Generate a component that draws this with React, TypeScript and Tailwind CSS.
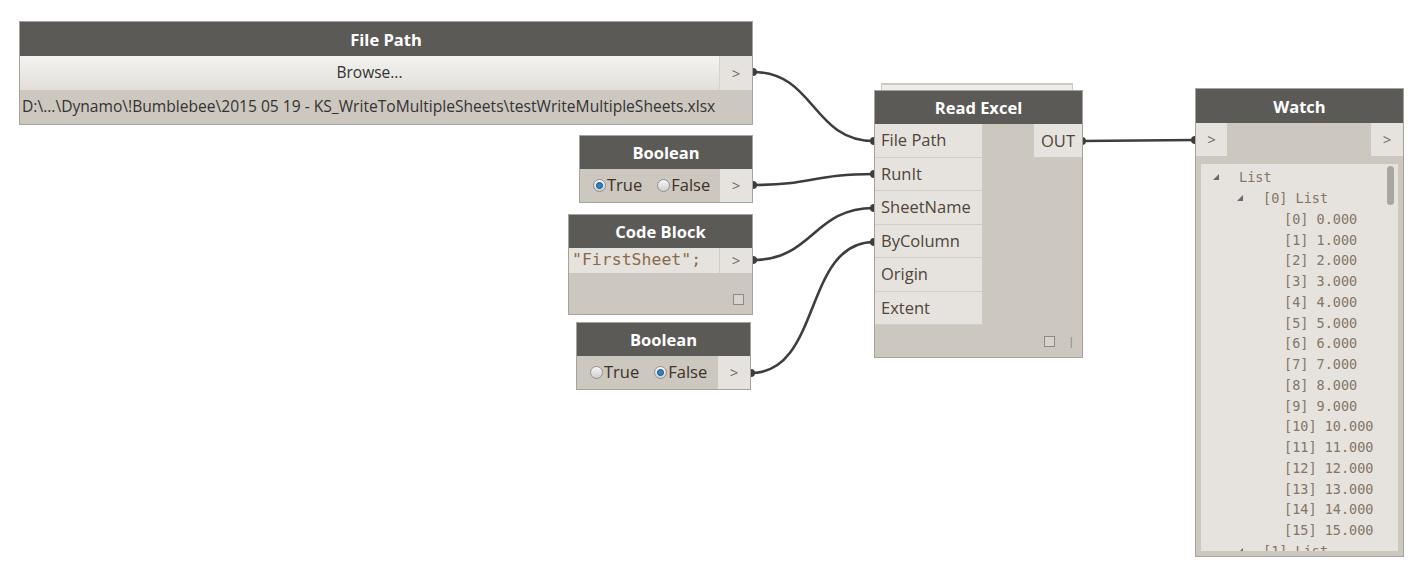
import React from "react"

const ui = "font-['Segoe_UI','Open_Sans','Noto_Sans',sans-serif]"
const mono = "font-['DejaVu_Sans_Mono','Liberation_Mono',monospace]"

function Header({ title, h = "h-[34px]" }: { title: string; h?: string }) {
  return (
    <div className={`${h} bg-[#5c5a57] flex items-center justify-center pt-[2px] text-white font-bold text-[16.5px]`}>
      {title}
    </div>
  )
}

function Arrow({ w = "w-[33px]", extra = "" }: { w?: string; extra?: string }) {
  return (
    <div className={`${w} ${extra} h-full bg-[#e6e3de] flex items-center justify-center text-[15px] text-[#6d6a66]`}>
      &gt;
    </div>
  )
}

function Radio({ on, label }: { on?: boolean; label: string }) {
  return (
    <div className="flex items-center gap-[1px]">
      <div className="w-[13px] h-[13px] rounded-full border border-[#8f9091] bg-gradient-to-b from-[#f6f6f6] to-[#cfcfcf] flex items-center justify-center">
        {on && <div className="w-[7px] h-[7px] rounded-full bg-[#2a86c6] border border-[#174f78]" />}
      </div>
      <span className="text-[16.5px] text-[#3d3128]">{label}</span>
    </div>
  )
}

function BoolNode({ pos, first }: { pos: string; first: boolean }) {
  return (
    <div className={`absolute ${pos} border border-[#a6a29c] bg-[#ccc7bf]`}>
      <Header title="Boolean" h="h-[33px]" />
      <div className="flex h-[33px]">
        <div className={`flex-1 flex items-center gap-[15px] ${first ? "pl-[13px]" : "pl-[13px]"}`}>
          <Radio on={first} label="True" />
          <Radio on={!first} label="False" />
        </div>
        <Arrow w="w-[32px]" />
      </div>
    </div>
  )
}

function Square({ extra = "" }: { extra?: string }) {
  return <div className={`w-[11px] h-[11px] border border-[#8d8a85] bg-[#d8d4cd] ${extra}`} />
}

function Tri() {
  return (
    <svg width="26" height="8" viewBox="0 0 26 8" className="shrink-0">
      <polygon points="0,7 6,7 6,1" fill="#6a6a6a" />
    </svg>
  )
}

const ports = ["File Path", "RunIt", "SheetName", "ByColumn", "Origin", "Extent"]

const watchRows: { indent: string; tri?: boolean; text: string }[] = [
  { indent: "pl-[12px]", tri: true, text: "List" },
  { indent: "pl-[36px]", tri: true, text: "[0] List" },
  ...Array.from({ length: 16 }, (_, i) => ({ indent: "pl-[83px]", text: `[${i}] ${i}.000` })),
  { indent: "pl-[36px]", tri: true, text: "[1] List" },
]

export default function App() {
  return (
    <div className={`relative w-[1427px] h-[580px] bg-white overflow-hidden ${ui}`}>
      {/* wires */}
      <svg className="absolute inset-0" width="1427" height="580">
        <g fill="none" stroke="#3d3d3d" strokeWidth="2.6">
          <path d="M753 72 C 815 72, 812 141, 874 141" />
          <path d="M753 185 C 813 185, 813 174, 874 174" />
          <path d="M753 260 C 813 260, 813 208, 874 208" />
          <path d="M751 373 C 822 373, 803 242, 874 242" />
          <path d="M1082 141 C 1138 141, 1138 140, 1195 140" />
        </g>
        <g fill="#3d3d3d">
          <circle cx="753" cy="72" r="4" />
          <circle cx="874" cy="141" r="4" />
          <circle cx="753" cy="185" r="4" />
          <circle cx="874" cy="174" r="4" />
          <circle cx="753" cy="260" r="4" />
          <circle cx="874" cy="208" r="4" />
          <circle cx="751" cy="373" r="4" />
          <circle cx="874" cy="242" r="4" />
          <circle cx="1082" cy="141" r="4" />
          <circle cx="1195" cy="140" r="4" />
        </g>
      </svg>

      {/* File Path */}
      <div className="absolute left-[19px] top-[21px] w-[734px] border border-[#a6a29c] bg-[#ccc7bf]">
        <Header title="File Path" />
        <div className="flex h-[34px]">
          <div className="flex-1 bg-gradient-to-b from-[#f4f3f1] to-[#e2dfda] flex items-center justify-center text-[15.5px] text-[#333]">
            Browse...
          </div>
          <Arrow w="w-[33px]" extra="border-l border-[#d6d2cc]" />
        </div>
        <div className="h-[34px] flex items-center pl-[2px] text-[15.6px] text-[#333] whitespace-nowrap">
          D:\...\Dynamo\!Bumblebee\2015 05 19 - KS_WriteToMultipleSheets\testWriteMultipleSheets.xlsx
        </div>
      </div>

      <BoolNode pos="left-[579px] top-[135px] w-[174px]" first />

      {/* Code Block */}
      <div className="absolute left-[568px] top-[214px] w-[185px] border border-[#a6a29c] bg-[#ccc7bf]">
        <Header title="Code Block" h="h-[33px]" />
        <div className="flex h-[25px]">
          <div className={`flex-1 bg-[#e6e3de] flex items-center pl-[3px] text-[16.5px] text-[#8a6a4c] ${mono}`}>
            "FirstSheet";
          </div>
          <Arrow w="w-[33px]" extra="border-l border-[#d0ccc5]" />
        </div>
        <div className="h-[41px] flex items-end justify-end pr-[8px] pb-[9px]">
          <Square />
        </div>
      </div>

      <BoolNode pos="left-[576px] top-[322px] w-[175px]" first={false} />

      {/* Read Excel (stacked) */}
      <div className="absolute left-[881px] top-[83px] w-[192px] h-[7px] border-t-2 border-x border-[#cdc9c3] bg-[#efedea]" />
      <div className="absolute left-[874px] top-[90px] w-[209px] border border-[#a6a29c] bg-[#ccc7bf]">
        <Header title="Read Excel" h="h-[33px]" />
        <div className="flex">
          <div className="w-[107px] flex flex-col">
            {ports.map((p) => (
              <div key={p} className="h-[33.5px] bg-[#e6e3de] border-b border-[#d2cec7] flex items-center pl-[6px] pt-[1px] text-[16.5px] text-[#4f433a]">
                {p}
              </div>
            ))}
          </div>
          <div className="flex-1" />
          <div className="w-[48px] h-[33px] bg-[#e6e3de] flex items-center justify-center pt-[1px] text-[16.5px] text-[#4f433a]">
            OUT
          </div>
        </div>
        <div className="h-[32px] flex items-center justify-end gap-[14px] pr-[8px]">
          <Square />
          <span className="text-[10px] text-[#777] leading-none">|</span>
        </div>
      </div>

      {/* Watch */}
      <div className="absolute left-[1195px] top-[88px] w-[209px] h-[469px] border border-[#a6a29c] bg-[#ccc7bf] flex flex-col">
        <Header title="Watch" />
        <div className="flex h-[33px] justify-between">
          <Arrow w="w-[31px]" />
          <Arrow w="w-[32px]" />
        </div>
        <div className={`relative mx-[5px] mt-[8px] h-[387px] bg-[#e6e3de] overflow-hidden pt-[3px] ${mono}`}>
          {watchRows.map((r, i) => (
            <div key={i} className={`h-[20.75px] flex items-center ${r.indent} text-[13.5px] text-[#857565] whitespace-nowrap`}>
              {r.tri && <Tri />}
              <span>{r.text}</span>
            </div>
          ))}
          <div className="absolute right-[4px] top-[2px] w-[7px] h-[39px] rounded-full bg-[#a9a5a0]" />
        </div>
      </div>
    </div>
  )
}
